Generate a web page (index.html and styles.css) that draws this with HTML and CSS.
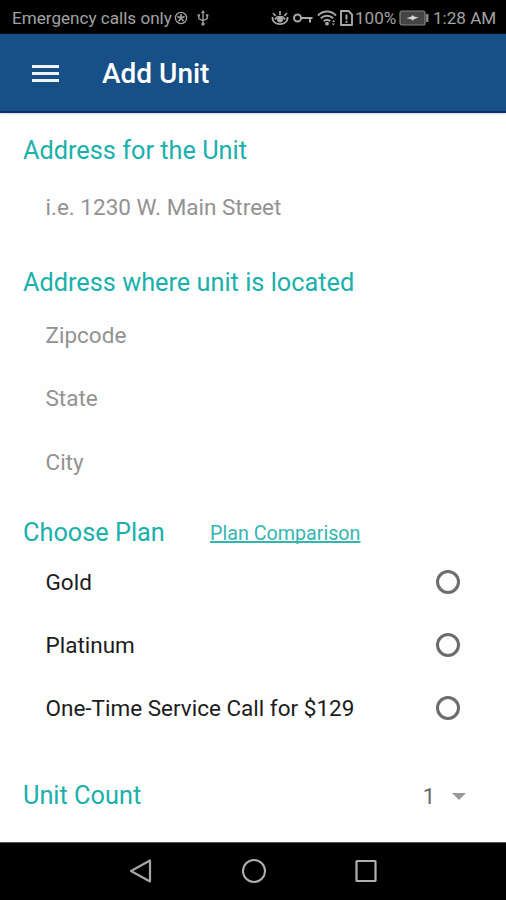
FILE: index.html
```html
<!DOCTYPE html>
<html lang="en">
<head>
  <meta charset="UTF-8" />
  <meta name="viewport" content="width=device-width, initial-scale=1.0"/>
  <title>Add Unit</title>
  <link rel="stylesheet" href="styles.css">
</head>
<body>
  <div class="status-bar">
    <span class="carrier">Emergency calls only</span>
    <svg class="icon-sync" width="14" height="14" viewBox="0 0 14 14">
      <circle cx="7" cy="7" r="5.6" fill="none" stroke="#a2a2a2" stroke-width="1.3"/>
      <path d="M7 3v4l3.6-1.6M7 7l2.6 3.2M7 7l-2.4 3.4M7 7L3.4 5.4" fill="none" stroke="#a2a2a2" stroke-width="1.6"/>
    </svg>
    <svg class="icon-usb" width="12" height="16" viewBox="0 0 12 16">
      <path d="M6 2v12M1.8 5.5v3L6 10.8l4.2-2.3v-3" fill="none" stroke="#9a9a9a" stroke-width="1.4"/>
      <path d="M6 0L8 3H4zM.6 4.2h2.4v2.4H.6zM9 4.2h2.4v2.4H9z" fill="#9a9a9a"/>
      <circle cx="6" cy="14" r="1.7" fill="#9a9a9a"/>
    </svg>
    <div class="status-right">
      <svg class="icon-eye" width="18" height="16" viewBox="0 0 18 16">
        <path d="M1.5 7C.5 16.500 17.500 16.500 16.500 7M4 9.500C6 5.500 12 5.500 14 9.500" fill="none" stroke="#a8a8a8" stroke-width="1.7"/>
        <circle cx="9" cy="9.500" r="3" fill="#a8a8a8"/>
        <path d="M9 1v4M2 3l2.600 3M16 3l-2.600 3" stroke="#a8a8a8" stroke-width="1.700"/>
      </svg>
      <svg class="icon-key" width="20" height="12" viewBox="0 0 20 12">
        <circle cx="4.500" cy="6" r="3.500" fill="none" stroke="#a8a8a8" stroke-width="2"/>
        <path d="M8 6h11.500M17 6v4.500" fill="none" stroke="#a8a8a8" stroke-width="2"/>
      </svg>
      <svg class="icon-wifi" width="20" height="16" viewBox="0 0 20 16">
        <path d="M1 5.500C6 .2 14 .2 19 5.500M3.800 8.300c3.600-3.500 8.800-3.500 12.400 0M6.700 11.200c2-1.900 4.600-1.900 6.600 0" fill="none" stroke="#a8a8a8" stroke-width="1.900"/>
        <circle cx="10" cy="13.700" r="1.900" fill="#a8a8a8"/>
        <path d="M15 12l1.500-2 1.500 2zM15 13.500l1.500 2 1.500-2z" fill="#a8a8a8"/>
      </svg>
      <svg class="icon-sim" width="13" height="16" viewBox="0 0 13 16">
        <path d="M1 1h7.500L12 4.500V15H1z" fill="none" stroke="#a8a8a8" stroke-width="1.900" stroke-linejoin="round"/>
        <path d="M6.500 4.500v5M6.500 10.800v2" stroke="#a8a8a8" stroke-width="1.900"/>
      </svg>
      <span class="battery-text">100%</span>
      <svg class="icon-battery" width="30" height="16" viewBox="0 0 30 16">
        <rect x="1" y="1" width="25" height="14" rx="2" fill="#444" stroke="#858585" stroke-width="1.200"/>
        <path d="M27 4h2.500v8H27z" fill="#858585"/>
        <path d="M7.500 8.300l5-1.800.8-1.500 1.700 1.600 4.500.8-4.700 1.800-.8 1.600-1.800-1.600z" fill="#d8d8d8"/>
      </svg>
      <span class="clock">1:28 AM</span>
    </div>
  </div>

  <div class="header">
    <div class="menu-btn">
      <span></span>
      <span></span>
      <span></span>
    </div>
    <h1>Add Unit</h1>
  </div>

  <div class="content">
    <h2 class="heading-address">Address for the Unit</h2>
    <div class="row field">i.e. 1230 W. Main Street</div>

    <h2 class="heading-location">Address where unit is located</h2>
    <div class="row field">Zipcode</div>
    <div class="row field">State</div>
    <div class="row field">City</div>

    <div class="plan-heading">
      <h2>Choose Plan</h2>
      <a class="compare" href="#">Plan Comparison</a>
    </div>
    <div class="row option">Gold <span class="radio"></span></div>
    <div class="row option">Platinum <span class="radio"></span></div>
    <div class="row option">One-Time Service Call for $129 <span class="radio"></span></div>

    <div class="unit-count">
      <h2>Unit Count</h2>
      <div class="count-select">1 <span class="arrow"></span></div>
    </div>
  </div>

  <div class="nav-bar">
    <svg width="24" height="26" viewBox="0 0 24 26">
      <path d="M21 2.500v21L2 13z" fill="none" stroke="#a6a6a6" stroke-width="2.200" stroke-linejoin="round"/>
    </svg>
    <svg width="26" height="26" viewBox="0 0 26 26">
      <circle cx="13" cy="13" r="11" fill="none" stroke="#b0b0b0" stroke-width="2"/>
    </svg>
    <svg width="24" height="26" viewBox="0 0 24 26">
      <rect x="2.500" y="3" width="19" height="20" rx=".5" fill="none" stroke="#b0b0b0" stroke-width="2.200"/>
    </svg>
  </div>
</body>
</html>
```
FILE: styles.css
```css
* {
  box-sizing: border-box;
}
body {
  margin: 0;
  height: 900px;
  display: flex;
  flex-direction: column;
  background-color: #fefefe;
  font-family: Roboto, "Liberation Sans", sans-serif;
  overflow: hidden;
}
.status-bar {
  height: 34px;
  padding: 2px 11px 0 12px;
  display: flex;
  align-items: center;
  background-color: #000;
  color: #a2a2a2;
  font-size: 17.1px;
  white-space: nowrap;
}
.carrier {
  width: 162px;
}
.icon-usb {
  margin-left: 9px;
}
.status-right {
  margin-left: auto;
  display: flex;
  align-items: center;
}
.icon-key {
  margin-left: 4px;
}
.icon-wifi {
  margin-left: 4px;
}
.icon-sim {
  margin-left: 3px;
}
.battery-text {
  margin-left: 2px;
  width: 41px;
}
.icon-battery {
  margin-left: 3px;
}
.clock {
  width: 62px;
  margin-left: 4px;
}
.header {
  height: 79px;
  padding: 2px 0 0 32px;
  display: flex;
  align-items: center;
  background-color: #174f87;
  border-bottom: 2px solid #0b2f6b;
  box-shadow: 0 1px 2px #d5d5de;
  color: #fff;
}
.menu-btn {
  width: 27px;
  display: flex;
  flex-direction: column;
  gap: 4px;
}
.menu-btn span {
  height: 3px;
  background-color: #eef4fa;
}
h1 {
  margin: 0 0 0 43px;
  font-size: 28px;
  font-weight: 500;
}
.content {
  flex: 1;
  padding: 21px 35px 0 23px;
}
h2 {
  margin: 0;
  font-size: 25.3px;
  font-weight: 400;
  line-height: 34px;
  color: #1ab0ab;
}
.heading-address {
  margin-bottom: 7px;
}
.heading-location {
  margin: 28px 0 3px;
}
.row {
  height: 63.3px;
  padding-left: 22.5px;
  display: flex;
  align-items: center;
  font-size: 22.5px;
}
.field {
  color: #929292;
}
.option {
  justify-content: space-between;
  padding-right: 11px;
  color: #1c1c1c;
}
.radio {
  width: 24px;
  height: 24px;
  border: 3px solid #6c6c6c;
  border-radius: 50%;
}
.plan-heading {
  margin-top: 23px;
  display: flex;
  align-items: center;
}
.plan-heading h2 {
  width: 187px;
}
.compare {
  color: #35b5b0;
  font-size: 19.7px;
  text-underline-offset: 1px;
  text-decoration-thickness: 2px;
  text-decoration-skip-ink: none;
}
.unit-count {
  margin-top: 39px;
  display: flex;
  align-items: center;
  justify-content: space-between;
}
.count-select {
  display: flex;
  align-items: center;
  gap: 17px;
  padding-right: 5px;
  font-size: 22px;
  color: #666;
}
.arrow {
  border-left: 7px solid transparent;
  border-right: 7px solid transparent;
  border-top: 7px solid #999;
}
.nav-bar {
  height: 58px;
  padding: 0 128px 2px 129px;
  display: flex;
  align-items: center;
  justify-content: space-between;
  background-color: #000;
  border-top: 1px solid #555;
}
```
